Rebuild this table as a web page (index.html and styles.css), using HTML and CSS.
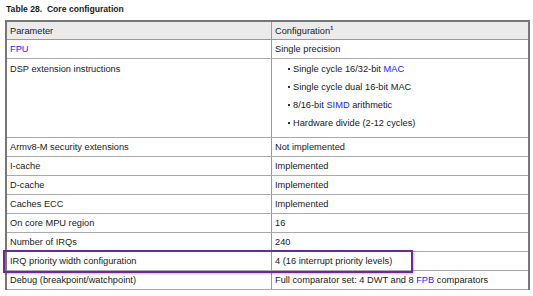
FILE: index.html
```html
<!DOCTYPE html>
<html>
<head>
<meta charset="utf-8">
<link rel="stylesheet" href="styles.css">
</head>
<body>
<div class="page">
  <div class="caption">Table 28.&nbsp; Core configuration</div>
  <table class="cfg">
    <thead>
      <tr><th class="c1">Parameter</th><th class="c2">Configuration<sup class="note">1</sup></th></tr>
    </thead>
    <tbody>
      <tr><td><span class="link">FPU</span></td><td>Single precision</td></tr>
      <tr class="tall"><td class="top">DSP extension instructions</td>
        <td class="top">
          <ul class="bullets">
            <li>Single cycle 16/32-bit <span class="link">MAC</span></li>
            <li>Single cycle dual 16-bit MAC</li>
            <li>8/16-bit <span class="link">SIMD</span> arithmetic</li>
            <li>Hardware divide (2-12 cycles)</li>
          </ul>
        </td></tr>
      <tr><td>Armv8-M security extensions</td><td>Not implemented</td></tr>
      <tr><td>I-cache</td><td>Implemented</td></tr>
      <tr><td>D-cache</td><td>Implemented</td></tr>
      <tr><td>Caches ECC</td><td>Implemented</td></tr>
      <tr><td>On core MPU region</td><td>16</td></tr>
      <tr><td>Number of IRQs</td><td>240</td></tr>
      <tr><td>IRQ priority width configuration</td><td>4 (16 interrupt priority levels)</td></tr>
      <tr><td>Debug (breakpoint/watchpoint)</td><td>Full comparator set: 4 DWT and 8 <span class="link">FPB</span> comparators</td></tr>
    </tbody>
  </table>
  <div class="highlight"></div>
</div>
</body>
</html>
```
FILE: styles.css
```css
html, body { margin: 0; padding: 0; background: #fff; }
body { width: 533px; height: 296px; overflow: hidden; }
.page {
  position: relative;
  font-family: "Liberation Sans", Arial, sans-serif;
  font-size: 9.25px;
  color: #1a1a1a;
  padding-top: 3px;
}
.caption {
  font-weight: bold;
  font-size: 8.6px;
  padding-left: 6px;
  height: 17px;
  line-height: 12px;
}
.cfg {
  margin-left: 5px;
  width: 525px;
  border-collapse: collapse;
  border-top: 2px solid #777;
  border-left: 2px solid #777;
  border-right: 2px solid #777;
}
.cfg th, .cfg td {
  text-align: left;
  font-weight: normal;
  padding: 0 3px;
  height: 18px;
  border-bottom: 1px solid #aaa;
  border-right: 1px solid #999;
  vertical-align: middle;
  white-space: nowrap;
}
.cfg th { background: #ebebeb; height: 17px; border-bottom: 1px solid #999; }
.c1 { width: 258px; }
.cfg .top { vertical-align: top; padding-top: 5px; height: 73px; }
.tall td { height: 73px; }
.bullets { list-style: none; margin: 0; padding: 0 0 0 15px; }
.bullets li { height: 18px; line-height: 11px; position: relative; padding-left: 3px; }
.bullets li::before {
  content: "";
  position: absolute;
  left: -2px; top: 4px;
  width: 2px; height: 2px;
  background: #333;
}
.link { color: #1a1aff; }
.note { color: #1a1aff; font-weight: bold; font-size: 6px; vertical-align: 0; position: relative; top: -4px; }
.highlight {
  position: absolute;
  left: 3px; top: 250px;
  width: 406px; height: 19px;
  border: 2px solid #6b2c91;
  box-shadow: 1px 1px 2px rgba(0,0,0,0.25);
  pointer-events: none;
}
```
